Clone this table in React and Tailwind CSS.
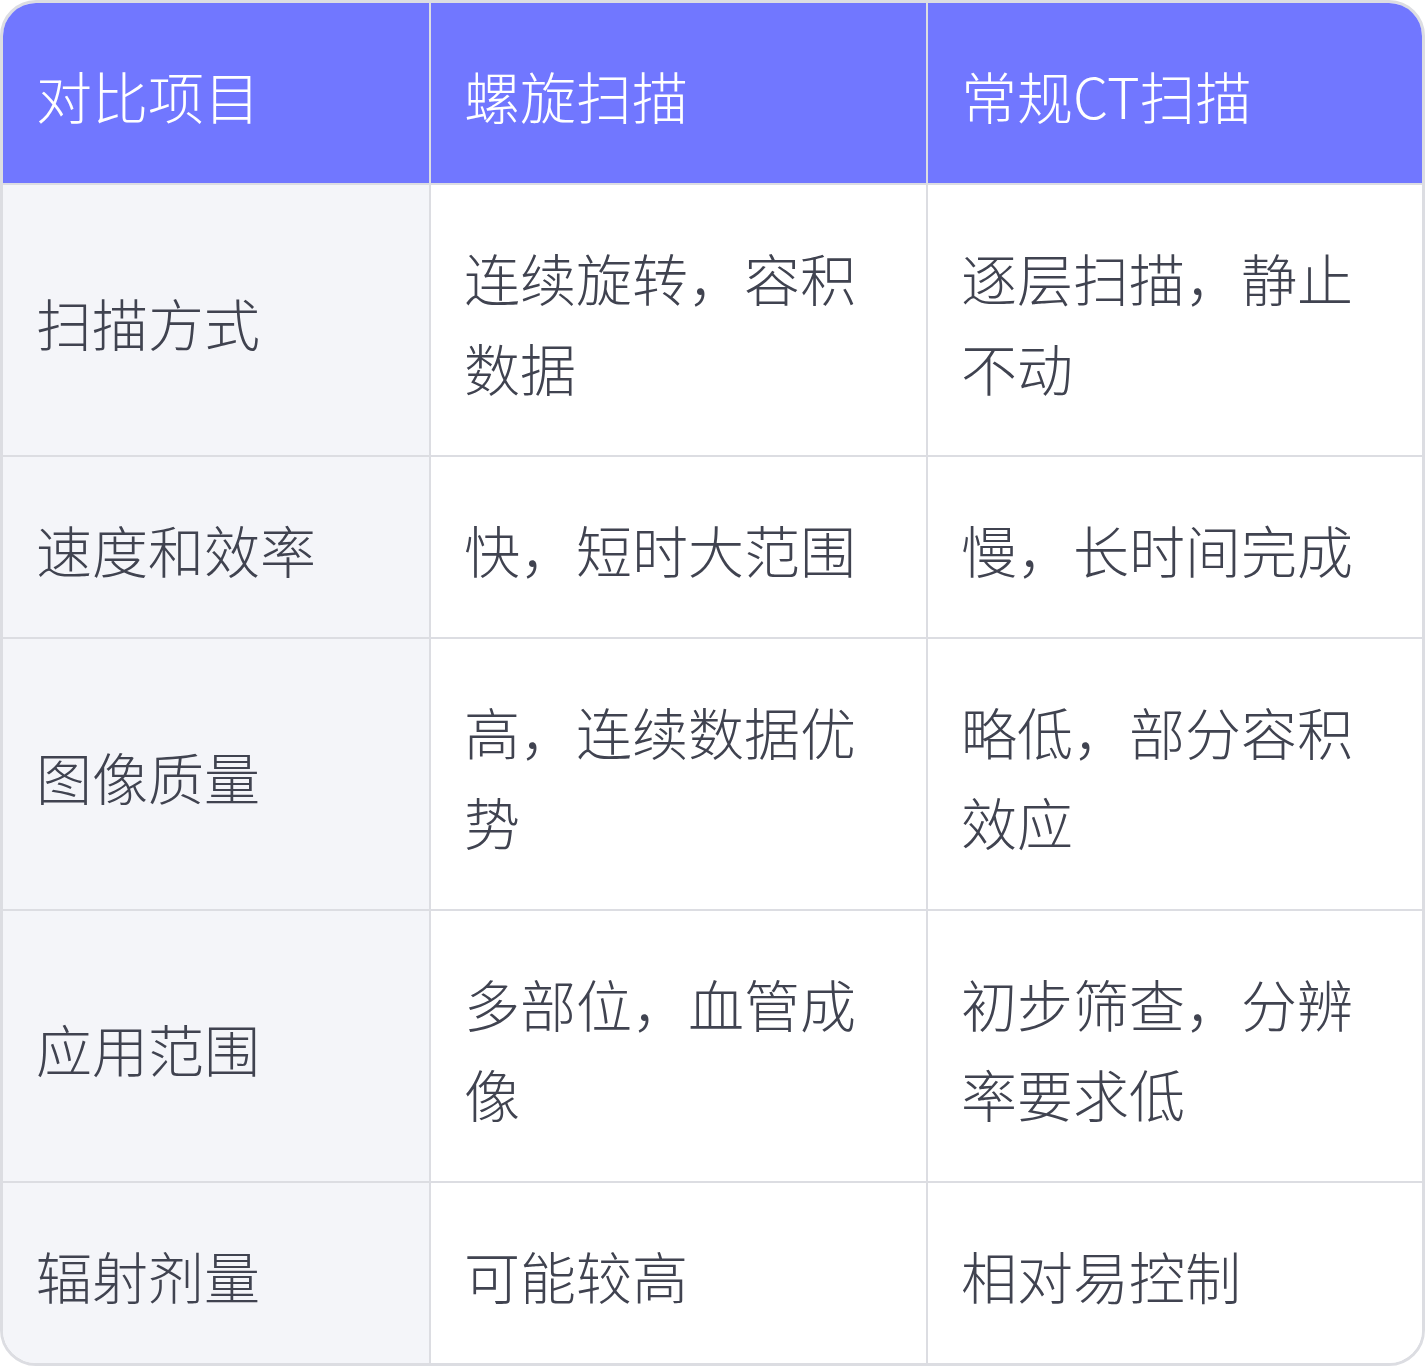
import React from "react";

const rows = [
  ["扫描方式", "连续旋转，容积数据", "逐层扫描，静止不动"],
  ["速度和效率", "快，短时大范围", "慢，长时间完成"],
  ["图像质量", "高，连续数据优势", "略低，部分容积效应"],
  ["应用范围", "多部位，血管成像", "初步筛查，分辨率要求低"],
  ["辐射剂量", "可能较高", "相对易控制"],
];

function App() {
  return (
    <div
      className="w-[1425px] bg-white"
      style={{ fontFamily: '"Noto Sans CJK SC", "Noto Sans", sans-serif' }}
    >
      <div className="border-[3px] border-[#dcdde2] rounded-[36px] overflow-hidden">
        <table className="w-full table-fixed border-collapse text-[56px] leading-[90px] font-light">
          <colgroup>
            <col className="w-[427px]" />
            <col className="w-[497px]" />
            <col />
          </colgroup>
          <thead>
            <tr className="bg-[#7177ff] text-white">
              <th className="text-left font-light px-[33px] pt-[47px] pb-[43px] border-r-2 border-b-2 border-[#dcdde2]">对比项目</th>
              <th className="text-left font-light px-[33px] pt-[47px] pb-[43px] border-r-2 border-b-2 border-[#dcdde2]">螺旋扫描</th>
              <th className="text-left font-light px-[33px] pt-[47px] pb-[43px] border-b-2 border-[#dcdde2]">常规CT扫描</th>
            </tr>
          </thead>
          <tbody className="text-[#404350]">
            {rows.map((r, i) => {
              const last = i === rows.length - 1;
              return (
                <tr key={i}>
                  <td className={"bg-[#f4f5f9] px-[33px] pt-[47px] pb-[43px] border-r-2 border-[#dcdde2] " + (last ? "" : "border-b-2")}>{r[0]}</td>
                  <td className={"bg-white px-[33px] pt-[47px] pb-[43px] border-r-2 border-[#dcdde2] " + (last ? "" : "border-b-2")}>{r[1]}</td>
                  <td className={"bg-white px-[33px] pt-[47px] pb-[43px] border-[#dcdde2] " + (last ? "" : "border-b-2")}>{r[2]}</td>
                </tr>
              );
            })}
          </tbody>
        </table>
      </div>
    </div>
  );
}

export default App;
